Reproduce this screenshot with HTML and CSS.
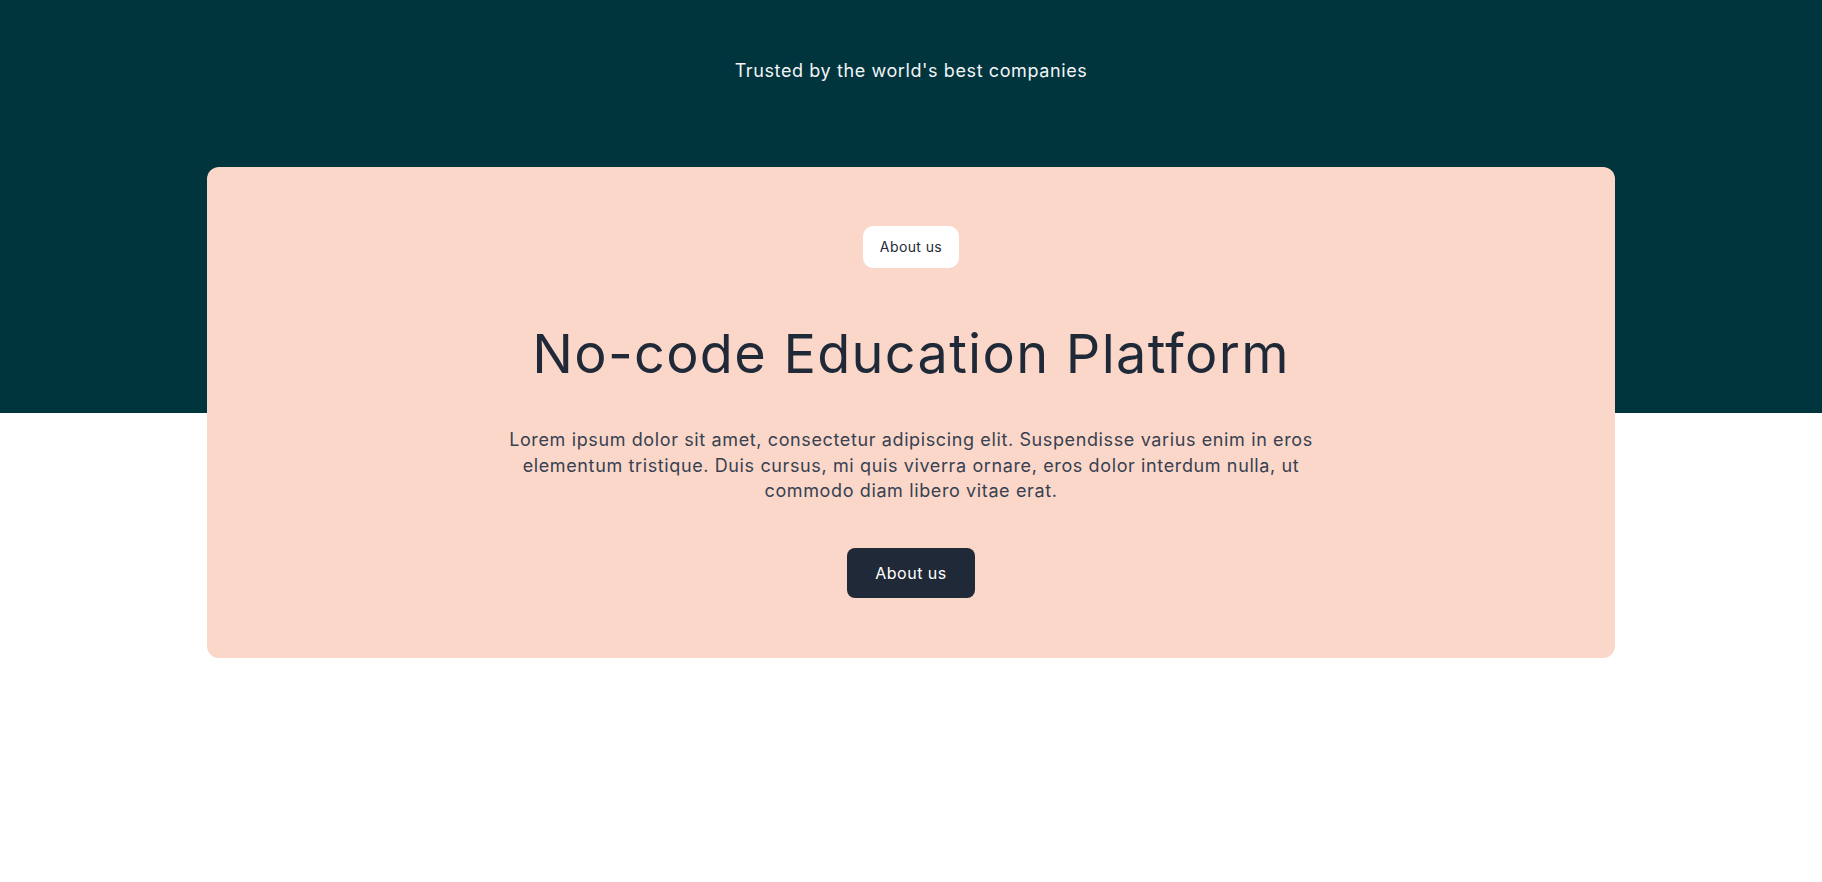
FILE: index.html
```html
<!DOCTYPE html>
<html lang="en">
<head>
<meta charset="utf-8">
<title>No-code Education Platform</title>
<link rel="stylesheet" href="styles.css">
</head>
<body>
<section class="hero">
  <p class="trusted">Trusted by the world's best companies</p>
  <div class="card">
    <span class="pill">About us</span>
    <h1 class="title">No-code Education Platform</h1>
    <p class="lead">Lorem ipsum dolor sit amet, consectetur adipiscing elit. Suspendisse varius enim in eros elementum tristique. Duis cursus, mi quis viverra ornare, eros dolor interdum nulla, ut commodo diam libero vitae erat.</p>
    <a class="btn" href="#">About us</a>
  </div>
</section>
</body>
</html>
```

FILE: styles.css
```css
* { box-sizing: border-box; }

body {
  margin: 0;
  background: #ffffff;
  font-family: Inter, "Open Sans", sans-serif;
  color: #1f2937;
}

.hero {
  background: linear-gradient(#00353e 0, #00353e 413px, #ffffff 413px);
  padding: 57px 0 224px;
}

.trusted {
  margin: 0;
  text-align: center;
  color: #f3f4f6;
  font-size: 18px;
  line-height: 27px;
  letter-spacing: 0.6px;
}

.card {
  width: 1408px;
  margin: 83px auto 0;
  background: #fbd7c9;
  border-radius: 12px;
  padding: 59px 0 60px;
  display: flex;
  flex-direction: column;
  align-items: center;
}

.pill {
  display: inline-block;
  background: #ffffff;
  border-radius: 10px;
  padding: 12px 17px;
  font-size: 14px;
  line-height: 18px;
  letter-spacing: 0.4px;
  color: #1f2937;
}

.title {
  margin: 54px 0 0;
  font-family: Inter, "Noto Sans", sans-serif;
  font-weight: 400;
  font-size: 54px;
  line-height: 64px;
  color: #1f2937;
  letter-spacing: 1.3px;
}

.lead {
  margin: 41px 0 0;
  max-width: 820px;
  text-align: center;
  font-size: 18px;
  line-height: 25.5px;
  letter-spacing: 0.62px;
  color: #374151;
}

.btn {
  display: inline-block;
  margin-top: 44px;
  background: #1f2937;
  color: #ffffff;
  text-decoration: none;
  border-radius: 8px;
  padding: 14px 28px;
  font-size: 16px;
  line-height: 22px;
  letter-spacing: 0.5px;
}
```
